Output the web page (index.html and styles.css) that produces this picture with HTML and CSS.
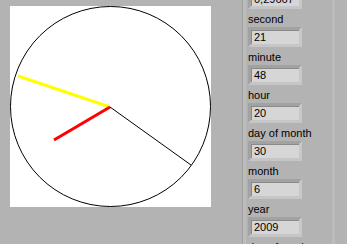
FILE: index.html
```html
<!DOCTYPE html>
<html>
<head>
<meta charset="utf-8">
<link rel="stylesheet" href="styles.css">
</head>
<body>
<div class="panel">
  <div class="clock">
    <svg width="201" height="201" viewBox="0 0 201 201">
      <circle cx="100.5" cy="100.5" r="100" fill="none" stroke="#000" stroke-width="1"/>
      <line x1="100" y1="101" x2="8" y2="70" stroke="#ffff00" stroke-width="3"/>
      <line x1="100" y1="101" x2="44" y2="134" stroke="#ff0000" stroke-width="3"/>
      <line x1="100" y1="101" x2="181" y2="159" stroke="#000" stroke-width="1"/>
    </svg>
  </div>
  <div class="cluster">
    <div class="items">
      <div class="field"><span>0,29667</span></div>
      <div class="label">second</div>
      <div class="field"><span>21</span></div>
      <div class="label">minute</div>
      <div class="field"><span>48</span></div>
      <div class="label">hour</div>
      <div class="field"><span>20</span></div>
      <div class="label">day of month</div>
      <div class="field"><span>30</span></div>
      <div class="label">month</div>
      <div class="field"><span>6</span></div>
      <div class="label">year</div>
      <div class="field"><span>2009</span></div>
      <div class="label">day of week</div>
    </div>
  </div>
  <div class="rail"></div>
</div>
</body>
</html>
```
FILE: styles.css
```css
html, body {
  margin: 0;
  padding: 0;
  background: #b3b3b3;
  overflow: hidden;
  height: 244px;
}
.panel {
  display: flex;
  height: 244px;
  font-family: "Liberation Sans", Arial, sans-serif;
  font-size: 11px;
  color: #000;
}
.clock {
  margin: 6px 0 0 10px;
  width: 201px;
  height: 201px;
  background: #fff;
  flex: none;
}
.clock svg {
  display: block;
}
.cluster {
  margin-left: 31px;
  width: 89px;
  flex: none;
  border-left: 1px solid #a0a0a0;
  box-shadow: inset 3px 0 0 #bdbdbd;
  overflow: hidden;
}
.items {
  margin-top: -11px;
  padding-left: 5px;
  display: flex;
  flex-direction: column;
}
.label {
  height: 16px;
  padding-top: 2px;
  line-height: 16px;
  white-space: nowrap;
}
.field {
  width: 45px;
  height: 12px;
  padding: 1px 0 1px 3px;
  border-style: solid;
  border-width: 3px;
  border-color: #a2a2a2 #c8c8c8 #c6c6c6 #a2a2a2;
  background: #d6d6d6;
  box-shadow: inset 1px 1px 0 #8a8a8a;
  line-height: 12px;
  box-sizing: content-box;
  overflow: hidden;
  white-space: nowrap;
}
.rail {
  width: 3px;
  flex: none;
  background: #bcbcbc;
}
```
